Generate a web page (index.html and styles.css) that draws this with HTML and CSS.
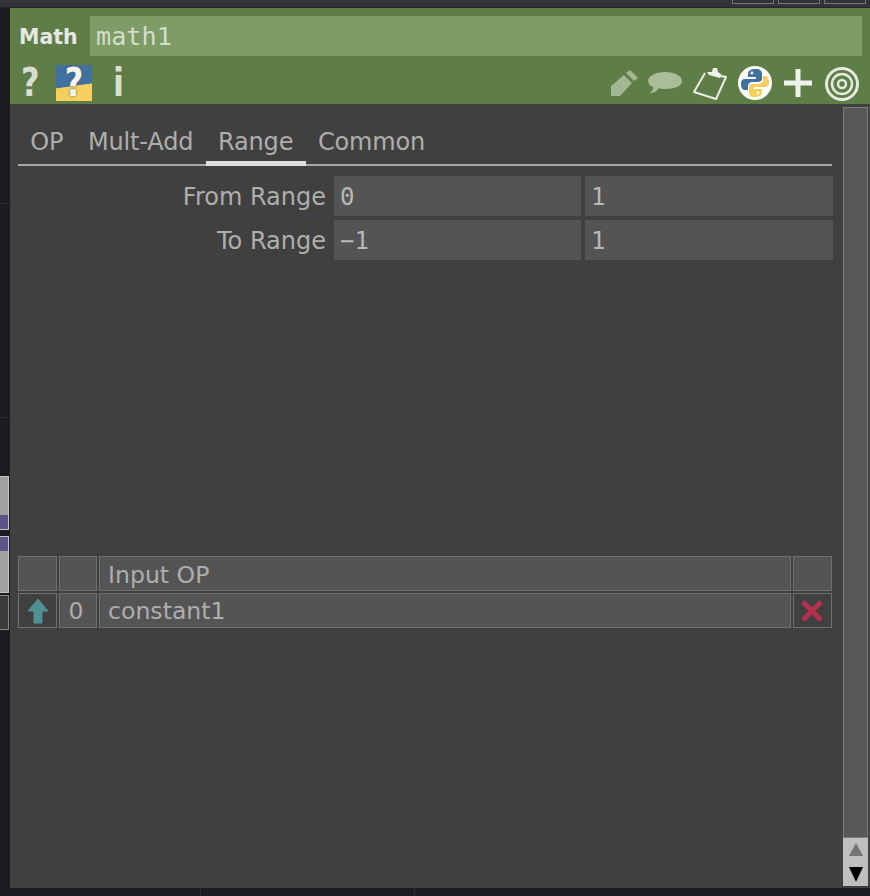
FILE: index.html
```html
<!DOCTYPE html>
<html lang="en">
<head>
    <meta charset="UTF-8">
    <title>Math - math1</title>
    <link rel="stylesheet" href="styles.css">
</head>
<body>

    <!-- network editor peeking out behind the panel -->
    <div class="net-line net-line-a"></div>
    <div class="net-line net-line-b"></div>
    <div class="net-hline net-hline-a"></div>
    <div class="net-hline net-hline-b"></div>
    <div class="net-node net-node-a"><div class="net-node-purple"></div></div>
    <div class="net-node net-node-b"><div class="net-node-purple"></div></div>
    <div class="net-node-dark"></div>
    <div class="top-buttons">
        <div class="top-button"></div>
        <div class="top-button"></div>
        <div class="top-button"></div>
    </div>

    <div class="top-strip"></div>

    <div class="panel">
        <div class="panel-head">
            <div class="name-row">
                <div class="op-type">Math</div>
                <div class="op-name">math1</div>
            </div>
            <div class="icon-row">
                <div class="icon-group-left">
                    <span class="glyph glyph-help">?</span>
                    <span class="py-help"><span class="glyph glyph-py">?</span></span>
                    <span class="glyph glyph-info">i</span>
                </div>
                <div class="icon-group-right">
                    <svg class="icon icon-pencil" width="28" height="27" viewBox="0 0 28 27">
                        <path d="M0 26 L0 16 L13 5 L21 13 L9 26 Z" fill="#a3b892"/>
                        <path d="M15 3 L19 0 L27 8 L23 11 Z" fill="#a3b892"/>
                    </svg>
                    <svg class="icon" width="34" height="22" viewBox="0 0 34 22">
                        <path d="M17 0 C27 0 34 4 34 9 C34 14 27 17 17 17 C15 17 13 17 11 16 C9 19 6 21 2 21 C4 19 6 17 5 15 C2 14 0 11 0 9 C0 4 7 0 17 0 Z" fill="#a9bd99"/>
                    </svg>
                    <svg class="icon" width="34" height="33" viewBox="0 0 34 33">
                        <path d="M12 6 L1 25 L23 32 L33 10 L28 9" fill="none" stroke="#e9eee4" stroke-width="2" stroke-linejoin="round"/>
                        <path d="M14 5 L19 5 L20 1 L24 1 L25 5 L29 8 L27 11 L16 8 Z" fill="#eef2ea"/>
                    </svg>
                    <svg class="icon" width="34" height="34" viewBox="0 0 34 34">
                        <circle cx="17" cy="17" r="17" fill="#ffffff"/>
                        <path d="M18 3 C12 3 10 5 10 8 L10 11 L18 11 L18 13 L7 13 C4 13 3 15 3 18 C3 21 4 24 7 24 L10 24 L10 20 C10 18 12 16 14 16 L20 16 C22 16 24 15 24 13 L24 8 C24 5 22 3 18 3 Z" fill="#41719f"/>
                        <path d="M16 31 C22 31 24 29 24 26 L24 23 L16 23 L16 21 L27 21 C30 21 31 19 31 16 C31 13 30 10 27 10 L25 10 L25 14 C25 16 23 18 20 18 L14 18 C12 18 11 19 11 21 L11 26 C11 29 12 31 16 31 Z" fill="#f6cf5c"/>
                        <circle cx="14" cy="7" r="1.4" fill="#ffffff"/>
                        <circle cx="20" cy="27" r="1.4" fill="#ffffff"/>
                    </svg>
                    <svg class="icon icon-plus" width="28" height="28" viewBox="0 0 28 28">
                        <path d="M14 0 V28 M0 14 H28" stroke="#eef2ea" stroke-width="5" fill="none"/>
                    </svg>
                    <svg class="icon icon-target" width="34" height="34" viewBox="0 0 34 34">
                        <circle cx="17" cy="17" r="15.5" fill="none" stroke="#e4eadf" stroke-width="3"/>
                        <circle cx="17" cy="17" r="10" fill="none" stroke="#e4eadf" stroke-width="2.5"/>
                        <circle cx="17" cy="17" r="4" fill="none" stroke="#e4eadf" stroke-width="2.5"/>
                    </svg>
                </div>
            </div>
        </div>

        <div class="panel-body">
            <div class="params">
                <div class="tabs">
                    <div class="tab">OP</div>
                    <div class="tab">Mult-Add</div>
                    <div class="tab tab-active">Range</div>
                    <div class="tab">Common</div>
                </div>

                <div class="param-row">
                    <div class="param-label">From Range</div>
                    <div class="param-value">0</div>
                    <div class="param-value param-value-b">1</div>
                </div>
                <div class="param-row">
                    <div class="param-label">To Range</div>
                    <div class="param-value">−1</div>
                    <div class="param-value param-value-b">1</div>
                </div>

                <div class="input-table">
                    <div class="cell"></div>
                    <div class="cell"></div>
                    <div class="cell cell-name cell-head">Input OP</div>
                    <div class="cell"></div>

                    <div class="cell cell-dark">
                        <svg class="arrow-icon" width="22" height="26" viewBox="0 0 22 26">
                            <path d="M11 1 L21 13 L15 13 L15 25 L7 25 L7 13 L1 13 Z" fill="#4f9093" stroke="#4f9093" stroke-linejoin="round"/>
                        </svg>
                    </div>
                    <div class="cell cell-num">0</div>
                    <div class="cell cell-name">constant1</div>
                    <div class="cell cell-dark">
                        <svg class="cross-icon" width="24" height="24" viewBox="0 0 24 24">
                            <path d="M3 3 L21 21 M21 3 L3 21" stroke="#b5304f" stroke-width="5" fill="none"/>
                        </svg>
                    </div>
                </div>
            </div>

            <div class="scrollbar">
                <div class="scroll-track"></div>
                <div class="scroll-arrows">
                    <div class="arrow-up"></div>
                    <div class="arrow-down"></div>
                </div>
            </div>
        </div>
    </div>

</body>
</html>
```

FILE: styles.css
```css
body {
    margin: 0;
    width: 870px;
    height: 896px;
    overflow: hidden;
    position: relative;
    background-color: #1a1c20;
    font-family: "DejaVu Sans", sans-serif;
}

.top-strip {
    height: 7px;
    background-color: #333439;
    border-bottom: 1px solid #26272b;
}

.top-buttons {
    position: absolute;
    top: -7px;
    right: 4px;
    display: flex;
    gap: 4px;
    z-index: 2;
}

.top-button {
    width: 42px;
    height: 11px;
    border: 1px solid #77787b;
    box-sizing: border-box;
}

.net-line {
    position: absolute;
    background-color: #2a2b36;
    width: 1px;
    top: 888px;
    height: 8px;
}

.net-line-a { left: 200px; }
.net-line-b { left: 414px; }

.net-hline {
    position: absolute;
    left: 0;
    width: 10px;
    height: 1px;
    background-color: #2c2d33;
}

.net-hline-a { top: 203px; }
.net-hline-b { top: 417px; }

.net-node {
    position: absolute;
    left: -20px;
    width: 29px;
    background-color: #a0a0a0;
    border: 1px solid #c4c4c4;
    box-sizing: border-box;
}

.net-node-a {
    top: 476px;
    height: 54px;
    display: flex;
    flex-direction: column;
    justify-content: flex-end;
}

.net-node-b {
    top: 536px;
    height: 57px;
}

.net-node-purple {
    height: 14px;
    background-color: #5f5488;
}

.net-node-dark {
    position: absolute;
    left: -20px;
    top: 595px;
    width: 29px;
    height: 35px;
    box-sizing: border-box;
    background-color: #3a3b3c;
    border: 1px solid #8a8a8a;
}

.panel {
    margin-left: 10px;
    height: 880px;
    display: flex;
    flex-direction: column;
    background-color: #404040;
}

.panel-head {
    height: 96px;
    background-color: #5f7d47;
    padding-top: 8px;
    box-sizing: border-box;
}

.name-row {
    display: flex;
    height: 40px;
    padding-right: 8px;
}

.op-type {
    width: 80px;
    padding-left: 9px;
    box-sizing: border-box;
    line-height: 42px;
    font-size: 20.5px;
    font-weight: bold;
    color: #e6e8e3;
}

.op-name {
    flex: 1;
    background-color: #7e9c65;
    padding-left: 6px;
    line-height: 42px;
    font-family: "DejaVu Sans Mono", monospace;
    font-size: 25.2px;
    color: #d5ddcd;
}

.icon-row {
    display: flex;
    justify-content: space-between;
    align-items: center;
    height: 48px;
    padding: 6px 11px 0 9px;
    box-sizing: border-box;
}

.icon-group-left {
    display: flex;
    align-items: center;
}

.icon-group-right {
    display: flex;
    align-items: center;
    gap: 11px;
}

.icon {
    display: block;
}

.icon-pencil {
    margin-right: -2px;
}

.icon-plus {
    margin-left: 1px;
}

.icon-target {
    margin-left: 2px;
    margin-top: 2px;
}

.glyph {
    display: inline-block;
    transform: scaleY(1.2);
    font-weight: bold;
    font-size: 32px;
    line-height: 36px;
    color: #d8dfd2;
}

.glyph-help {
    width: 37px;
    padding-left: 2px;
    box-sizing: border-box;
}

.glyph-py {
    color: #f4f4f0;
    text-shadow: 0 0 2px #555555;
}

.py-help {
    width: 36px;
    height: 36px;
    text-align: center;
    background: linear-gradient(172deg, #41719f 0 56%, #f6cf5c 58% 100%);
    margin-right: 21px;
}

.glyph-info {
    width: 12px;
}

.panel-body {
    flex: 1;
    display: flex;
}

.params {
    flex: 1;
    padding: 0 0 0 8px;
}

.tabs {
    display: flex;
    height: 37px;
    margin-top: 23px;
    margin-right: 1px;
    margin-bottom: 10px;
    border-bottom: 2px solid #a8a8a8;
}

.tab {
    padding: 0 12.3px;
    line-height: 30px;
    font-size: 24px;
    letter-spacing: -0.15px;
    color: #aeaeae;
}

.tab-active {
    height: 34px;
    margin-bottom: -2px;
    border-bottom: 5px solid #dedede;
}

.param-row {
    display: flex;
    height: 40px;
    gap: 4px;
    margin-bottom: 4px;
}

.param-label {
    width: 308px;
    margin-right: 4px;
    text-align: right;
    line-height: 42px;
    font-size: 24px;
    color: #aeaeae;
}

.param-value {
    width: 247px;
    padding-left: 6px;
    box-sizing: border-box;
    background-color: #545454;
    line-height: 42px;
    font-family: "DejaVu Sans Mono", monospace;
    font-size: 24px;
    color: #b8b8b8;
}

.param-value-b {
    width: 248px;
}

.input-table {
    display: grid;
    grid-template-columns: 39px 38px 1fr 39px;
    grid-template-rows: 35px 35px;
    gap: 2px;
    width: 814px;
    margin-top: 296px;
}

.cell {
    display: flex;
    align-items: center;
    justify-content: center;
    background-color: #545454;
    border: 1px solid #707070;
    box-sizing: border-box;
    font-size: 23.6px;
    color: #aeaeae;
}

.cell-name {
    justify-content: flex-start;
    padding-left: 8px;
}

.cell-head {
    padding-top: 3px;
}

.cell-num {
    padding-right: 4px;
}

.cell-dark {
    background-color: #404040;
}

.arrow-icon {
    margin-left: 1px;
}

.cross-icon {
    margin-right: 1px;
}

.scrollbar {
    width: 25px;
    margin-left: 10px;
    margin-right: 2px;
    margin-top: 3px;
    margin-bottom: 2px;
    display: flex;
    flex-direction: column;
}

.scroll-track {
    flex: 1;
    background-color: #585858;
    border: 1px solid #7c7c7c;
}

.scroll-arrows {
    height: 48px;
    padding-top: 5px;
    box-sizing: border-box;
    background-color: #bfbfbf;
    display: flex;
    flex-direction: column;
    align-items: center;
    gap: 11px;
}

.arrow-up {
    width: 0;
    height: 0;
    border-left: 7px solid transparent;
    border-right: 7px solid transparent;
    border-bottom: 13px solid #747474;
}

.arrow-down {
    width: 0;
    height: 0;
    border-left: 7px solid transparent;
    border-right: 7px solid transparent;
    border-top: 15px solid #000000;
}
```
